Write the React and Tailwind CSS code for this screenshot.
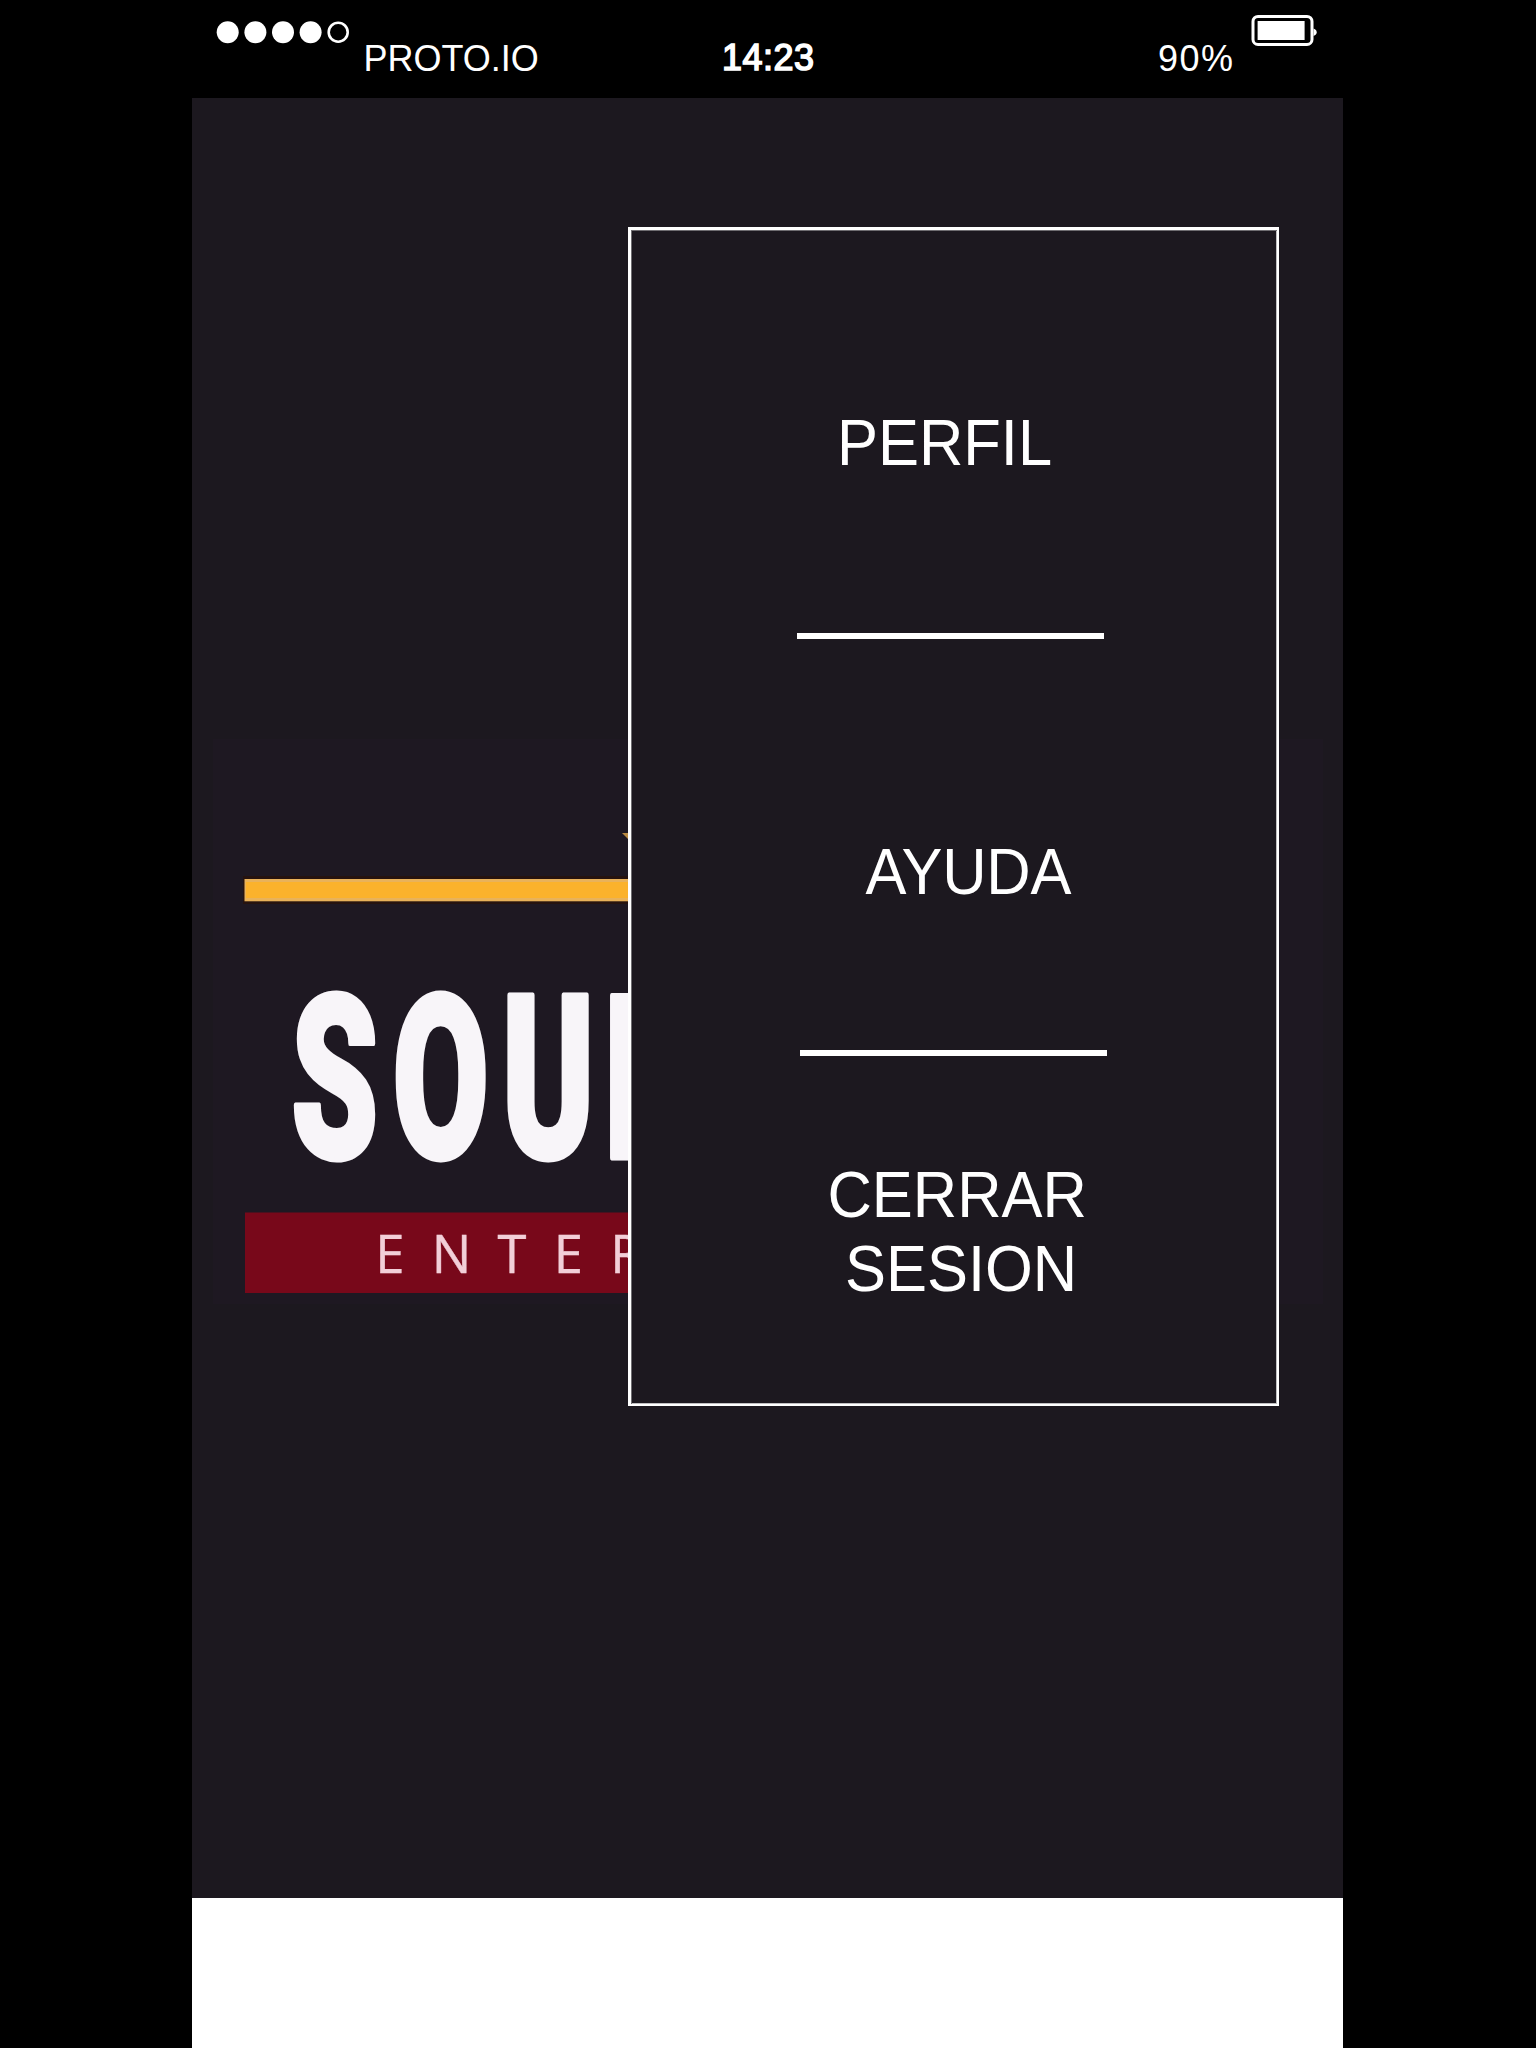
const MENU_TEXT =
  "block w-max h-[74px] leading-[74px] text-[61.44px] whitespace-nowrap origin-[0_58px] scale-y-[1.04] translate-y-[1px]";
const STATUS_TEXT =
  "block h-[40px] leading-[40px] text-[36px] whitespace-nowrap origin-[0_32px] scale-y-[1.045]";

function StatusBar() {
  return (
    <header className="flex h-[98px] w-full items-start bg-black text-white">
      <svg className="ml-[24px] mt-[20px] h-[24px] w-[136px] shrink-0" viewBox="0 0 136 24" fill="#fff">
        <circle cx="11.7" cy="12.2" r="11" />
        <circle cx="39.4" cy="12.2" r="11" />
        <circle cx="67" cy="12.2" r="11" />
        <circle cx="94.6" cy="12.2" r="11" />
        <circle cx="122.2" cy="12.2" r="9.5" fill="none" stroke="#fff" strokeWidth="2.6" />
      </svg>
      <span className={`${STATUS_TEXT} ml-[11.5px] mt-[39px] w-[180px]`}>PROTO.IO</span>
      <span className={`${STATUS_TEXT} ml-[178.5px] mt-[38px] w-[100px] tracking-[0.5px] [-webkit-text-stroke:1.5px_white]`}>14:23</span>
      <span className={`${STATUS_TEXT} ml-[336px] mt-[39px] w-[76px] tracking-[1.5px]`}>90%</span>
      <svg className="ml-[16px] mt-[14px] h-[32px] w-[68px] shrink-0" viewBox="0 0 68 32">
        <rect x="3" y="2.4" width="59" height="28" rx="5" fill="none" stroke="#fff" strokeWidth="3" />
        <rect x="7.6" y="7" width="47" height="19" fill="#fff" />
        <path d="M63.5 14.5Q66.7 15.6 66.7 18.2Q66.7 20.8 63.5 22Z" fill="#fff" />
      </svg>
    </header>
  );
}

function Logo() {
  return (
    <svg className="block h-[565px] w-[1110px]" viewBox="213 739 1110 565">
      <rect x="213" y="739" width="1110" height="565" fill="#1e1822" />
      <path d="M622 833L640 833L640 850L629 840Z" fill="#b98a42" />
      <rect x="243" y="876" width="1030" height="28" fill="#26130f" />
      <rect x="244.5" y="879" width="1028" height="22.3" fill="#e9b25a" />
      <rect x="246" y="882" width="1026" height="16" fill="#fbb22c" />
      <g transform="translate(0 1157.5) scale(0.61 1)">
        <text
          x="477 643.6 822.6 990.2"
          y="0"
          fill="#f8f5f9"
          stroke="#f8f5f9"
          strokeWidth="5"
          strokeLinejoin="round"
          fontFamily="Roboto, 'Liberation Sans', sans-serif"
          fontWeight="900"
          fontSize="229"
        >
          SOUN
        </text>
      </g>
      <rect x="245" y="1212.5" width="1028" height="80.5" fill="#78081a" />
      <text
        x="375.3 431.7 497.4 553.8 610.2"
        y="1273"
        fill="#f2cfd8"
        stroke="#f2cfd8"
        strokeWidth="0.4"
        fontFamily="'Open Sans', sans-serif"
        fontSize="52.5"
      >
        ENTER
      </text>
    </svg>
  );
}

function Menu() {
  return (
    <nav className="absolute left-[436px] top-[129px] h-[1179px] w-[651px] border-b-2 border-l-[3px] border-r-2 border-t-[3px] border-white bg-[#1c181f] text-white shadow-[inset_1px_1px_0_0_#6f6d71,inset_-1px_-1px_0_0_#c0bfc1]">
      <div className="flex flex-col items-start">
        <span className={`${MENU_TEXT} ml-[206px] mt-[176px]`}>PERFIL</span>
        <div className="ml-[166px] mt-[153px] h-[6px] w-[307px] bg-white" />
        <span className={`${MENU_TEXT} ml-[234.5px] mt-[196px] tracking-[-0.3px]`}>AYUDA</span>
        <div className="ml-[169px] mt-[141px] h-[6px] w-[307px] bg-white" />
        <span className={`${MENU_TEXT} ml-[196.5px] mt-[102px]`}>CERRAR</span>
        <span className={`${MENU_TEXT} ml-[214px]`}>SESION</span>
      </div>
    </nav>
  );
}

export default function App() {
  return (
    <div className="flex h-[2048px] w-[1536px] justify-center overflow-hidden bg-black font-['Liberation_Sans',Arial,sans-serif]">
      <div className="flex w-[1152px] flex-col">
        <StatusBar />
        <main className="relative h-[1800px] w-[1151px] bg-[#1c181f] pl-[21px] pt-[641px]">
          <Logo />
          <Menu />
        </main>
        <footer className="w-[1151px] flex-1 bg-white" />
      </div>
    </div>
  );
}
